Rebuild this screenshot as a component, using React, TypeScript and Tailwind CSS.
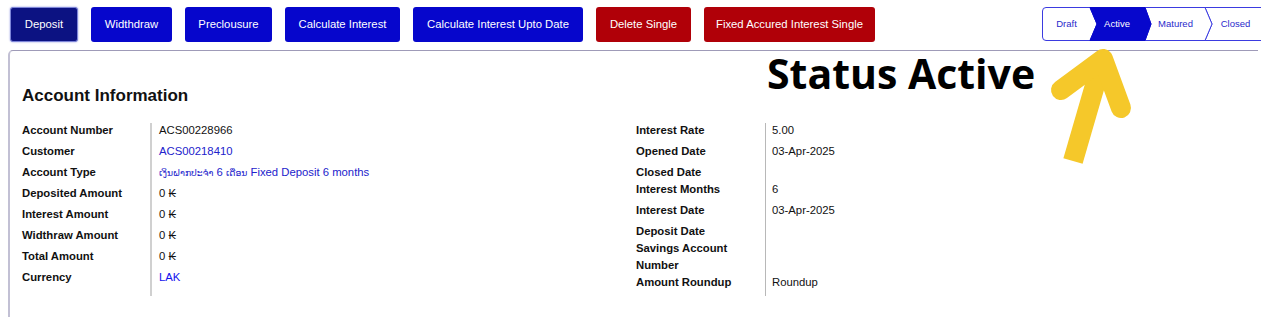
import React from "react";

const buttons: { label: string; w: string; kind: "active" | "blue" | "red" }[] = [
  { label: "Deposit", w: "w-[68px]", kind: "active" },
  { label: "Widthdraw", w: "w-[81px]", kind: "blue" },
  { label: "Preclousure", w: "w-[87px]", kind: "blue" },
  { label: "Calculate Interest", w: "w-[115px]", kind: "blue" },
  { label: "Calculate Interest Upto Date", w: "w-[170px]", kind: "blue" },
  { label: "Delete Single", w: "w-[95px]", kind: "red" },
  { label: "Fixed Accured Interest Single", w: "w-[171px]", kind: "red" },
];

const lao = "text-[9.2px]";

const leftRows: { label: string; value: React.ReactNode; color?: string }[] = [
  { label: "Account Number", value: "ACS00228966" },
  { label: "Customer", value: "ACS00218410", color: "text-[#2222cc]" },
  {
    label: "Account Type",
    value: (
      <>
        <span className={lao}>ເງິນຝາກປະຈຳ</span> 6 <span className={lao}>ເດືອນ</span> Fixed Deposit 6 months
      </>
    ),
    color: "text-[#2222cc]",
  },
  { label: "Deposited Amount", value: "0 ₭" },
  { label: "Interest Amount", value: "0 ₭" },
  { label: "Widthraw Amount", value: "0 ₭" },
  { label: "Total Amount", value: "0 ₭" },
  { label: "Currency", value: "LAK", color: "text-[#1212ee]" },
];

const rightRows: { label: string; value: string; h: string; lh?: string }[] = [
  { label: "Interest Rate", value: "5.00", h: "h-[21px]" },
  { label: "Opened Date", value: "03-Apr-2025", h: "h-[21px]" },
  { label: "Closed Date", value: "", h: "h-[17px]" },
  { label: "Interest Months", value: "6", h: "h-[21px]" },
  { label: "Interest Date", value: "03-Apr-2025", h: "h-[21px]" },
  { label: "Deposit Date", value: "", h: "h-[16px]" },
  { label: "Savings Account Number", value: "", h: "h-[35px]", lh: "leading-[17px]" },
  { label: "Amount Roundup", value: "Roundup", h: "h-[21px]" },
];

function Stepper() {
  return (
    <div className="relative w-[235px] h-[34px] shrink-0 ml-[167px]">
      <svg className="absolute inset-0" width="235" height="34" viewBox="0 0 235 34">
        <path d="M4 0.5 H48 L55 17 L48 33.5 H4 Q0.5 33.5 0.5 30 V4 Q0.5 0.5 4 0.5 Z" fill="#fff" stroke="#3b3be0" strokeWidth="1" />
        <path d="M163 0.5 H230 Q234 0.5 234 4 V30 Q234 33.5 230 33.5 H163 L170 17 Z" fill="#fff" stroke="#3b3be0" strokeWidth="1" />
        <path d="M103 0.5 H163 L170 17 L163 33.5 H103 L109 17 Z" fill="#fff" stroke="#3b3be0" strokeWidth="1" />
        <path d="M48 0.5 H103 L109 17 L103 33.5 H48 L55 17 Z" fill="#0707cc" stroke="#0707cc" strokeWidth="1" />
      </svg>
      <div className="relative flex h-full items-center text-[9.5px] leading-none">
        <span className="w-[49px] text-center text-[#2a2acc]">Draft</span>
        <span className="w-[52px] text-center text-white">Active</span>
        <span className="w-[65px] text-center text-[#2a2acc]">Matured</span>
        <span className="w-[55px] text-center text-[#2a2acc]">Closed</span>
      </div>
    </div>
  );
}

export default function App() {
  return (
    <div className="relative w-[1261px] h-[317px] overflow-hidden bg-white text-[#111] font-['Liberation_Sans','DejaVu_Sans',Arial,sans-serif]">
      <div className="flex items-start pt-[7px] pl-[10px]">
        <div className="flex gap-[13px] shrink-0">
          {buttons.map((b) => (
            <div
              key={b.label}
              className={
                b.w +
                " h-[35px] flex items-center justify-center rounded-[3px] text-[11.3px] text-white whitespace-nowrap " +
                (b.kind === "active"
                  ? "bg-[#0c1282] border border-[#7d85d8] shadow-[0_0_2px_#8a90e0]"
                  : b.kind === "blue"
                  ? "bg-[#0606cc]"
                  : "bg-[#b00008]")
              }
            >
              {b.label}
            </div>
          ))}
        </div>
        <Stepper />
      </div>

      <div className="mt-[8px] ml-[8px] w-[1250px] h-[267px] border-l-2 border-t border-l-[#c2c0d4] border-t-[#9f9bb8] rounded-tl-[5px] pl-[12px] pt-[35px]">
        <div className="text-[17px] font-bold leading-[20px]">Account Information</div>
        <div className="mt-[17px] flex text-[11.3px] leading-[14px]">
          <div className="w-[614px] flex">
            <div className="w-[128px] font-bold">
              {leftRows.map((r) => (
                <div key={r.label} className="h-[21px]">{r.label}</div>
              ))}
            </div>
            <div className="border-l-2 border-[#d0d0d0] pl-[7px]">
              {leftRows.map((r) => (
                <div key={r.label} className={"h-[21px] whitespace-nowrap " + (r.color ?? "text-[#111]")}>
                  {r.value}
                </div>
              ))}
            </div>
          </div>
          <div className="flex">
            <div className="w-[129px] font-bold">
              {rightRows.map((r) => (
                <div key={r.label} className={r.h + " " + (r.lh ?? "")}>{r.label}</div>
              ))}
            </div>
            <div className="border-l border-[#b8b8b8] pl-[6px]">
              {rightRows.map((r) => (
                <div key={r.label} className={r.h + " whitespace-nowrap"}>{r.value}</div>
              ))}
            </div>
          </div>
        </div>
      </div>

      <div className="absolute left-[767px] top-[53px] text-[41px] leading-none font-bold text-black font-['Open_Sans',sans-serif] whitespace-nowrap">
        Status Active
      </div>

      <svg className="absolute left-[1040px] top-[40px]" width="100" height="130" viewBox="0 0 100 130">
        <line x1="33" y1="121" x2="60" y2="28" stroke="#F5C82A" strokeWidth="20" strokeLinecap="butt" />
        <polyline points="21,50 63,19 81,68" fill="none" stroke="#F5C82A" strokeWidth="20" strokeLinecap="round" strokeLinejoin="round" />
      </svg>
    </div>
  );
}
